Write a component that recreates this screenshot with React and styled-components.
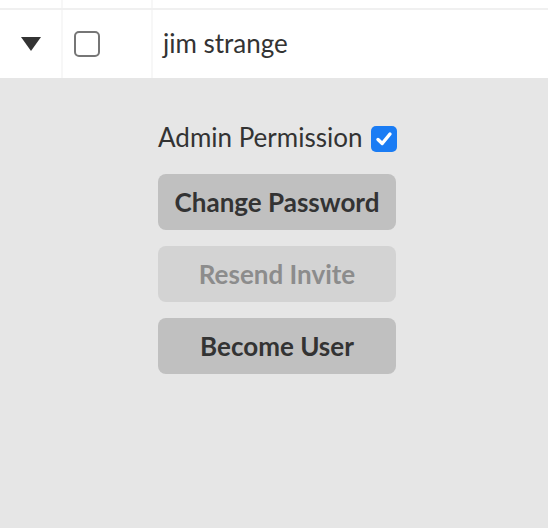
import React, { useState } from 'react';
import styled, { createGlobalStyle } from 'styled-components';

const GlobalStyle = createGlobalStyle`
  html, body {
    margin: 0;
    padding: 0;
    background: #e6e6e6;
    font-family: Lato, "Open Sans", sans-serif;
    color: #333;
  }
`;

const Page = styled('div')`
  display: flex;
  flex-direction: column;
  width: 548px;
  height: 528px;
  background: #e6e6e6;
  overflow: hidden;
`;

const Row = styled('div')`
  display: grid;
  grid-template-columns: 63px 90px 1fr;
  height: ${(p) => p.height}px;
  background: #fff;
  border-bottom: ${(p) => (p.divider ? '2px solid #f0f0f0' : 'none')};
`;

const Cell = styled('div')`
  display: flex;
  align-items: center;
  justify-content: ${(p) => (p.center ? 'center' : 'flex-start')};
  padding-left: ${(p) => p.pad || 0}px;
  padding-bottom: ${(p) => p.lift || 0}px;
  border-right: ${(p) => (p.last ? 'none' : '2px solid #f7f7f7')};
  font-size: 26px;
  color: #333;
`;

const Triangle = styled('span')`
  width: 0;
  height: 0;
  border-left: 10px solid transparent;
  border-right: 10px solid transparent;
  border-top: 14px solid #333;
`;

const Box = styled('span')`
  box-sizing: border-box;
  width: 26px;
  height: 26px;
  border-radius: 5px;
  display: inline-flex;
  align-items: center;
  justify-content: center;
  flex-shrink: 0;
  cursor: pointer;
  border: ${(p) => (p.checked ? 'none' : '2px solid #767676')};
  background: ${(p) => (p.checked ? '#1a7cf4' : '#fff')};
`;

const Panel = styled('div')`
  display: flex;
  flex-direction: column;
  align-items: flex-start;
  gap: 16px;
  padding: 48px 0 0 158px;
`;

const PermissionLine = styled('label')`
  display: flex;
  align-items: center;
  gap: 9px;
  font-size: 26px;
  color: #333;
  height: 26px;
  margin-bottom: 6px;
`;

const PermissionText = styled('span')`
  margin-top: -4px;
`;

const Button = styled('button')`
  width: 238px;
  height: 56px;
  padding: 0;
  border: none;
  border-radius: 8px;
  font-family: Lato, "Open Sans", sans-serif;
  font-weight: 700;
  font-size: 26px;
  background: ${(p) => (p.disabled ? '#d3d3d3' : '#c0c0c0')};
  color: ${(p) => (p.disabled ? '#8c8c8c' : '#333')};
  cursor: ${(p) => (p.disabled ? 'default' : 'pointer')};
`;

function Checkbox({ checked, onToggle }) {
  return (
    <Box checked={checked} onClick={onToggle}>
      {checked && (
        <svg width="20" height="20" viewBox="0 0 20 20">
          <path d="M4 10.5 L8.2 14.5 L16 5" fill="none" stroke="#fff" strokeWidth="3.4" strokeLinecap="round" strokeLinejoin="round" />
        </svg>
      )}
    </Box>
  );
}

export default function App() {
  const [selected, setSelected] = useState(false);
  const [admin, setAdmin] = useState(true);

  return (
    <Page>
      <GlobalStyle />
      <Row height={8} divider>
        <Cell center />
        <Cell center />
        <Cell last />
      </Row>
      <Row height={68}>
        <Cell center>
          <Triangle />
        </Cell>
        <Cell pad={11}>
          <Checkbox checked={selected} onToggle={() => setSelected(!selected)} />
        </Cell>
        <Cell pad={10} lift={3} last>jim strange</Cell>
      </Row>
      <Panel>
        <PermissionLine>
          <PermissionText>Admin Permission</PermissionText>
          <Checkbox checked={admin} onToggle={() => setAdmin(!admin)} />
        </PermissionLine>
        <Button>Change Password</Button>
        <Button disabled>Resend Invite</Button>
        <Button>Become User</Button>
      </Panel>
    </Page>
  );
}
